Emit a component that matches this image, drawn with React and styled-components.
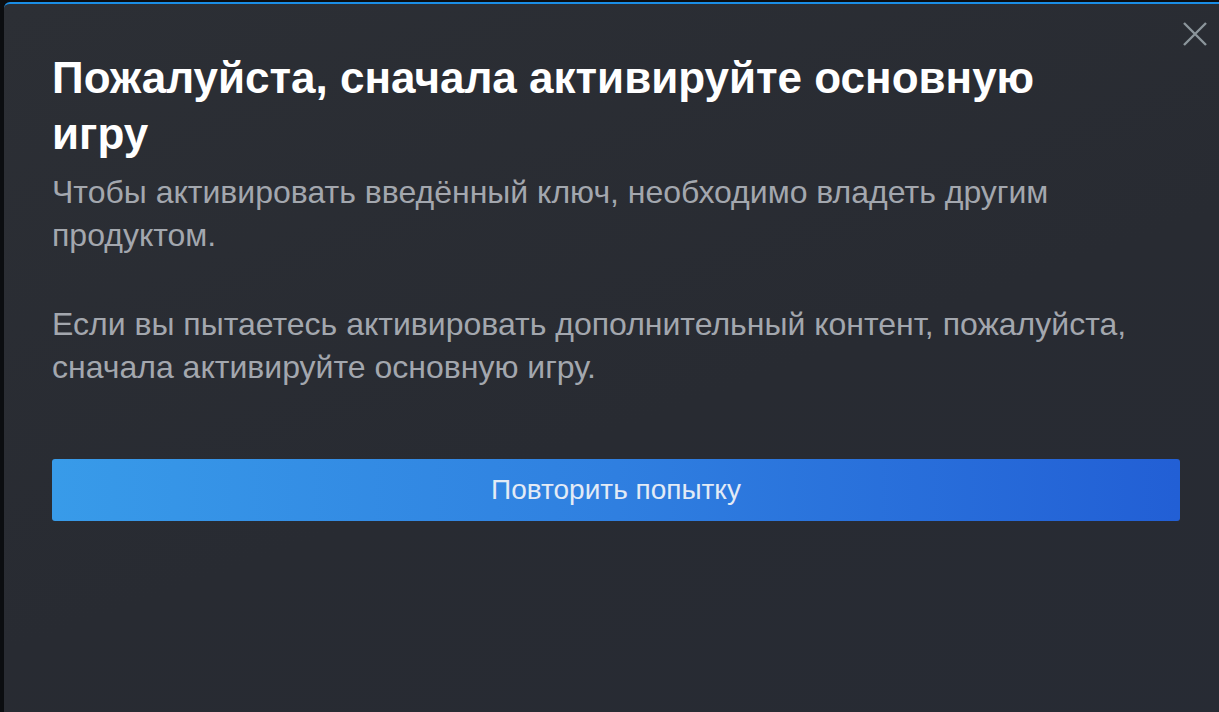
import React from 'react';
import styled, { createGlobalStyle } from 'styled-components';

const GlobalStyle = createGlobalStyle`
  html, body {
    margin: 0;
    padding: 0;
    background: #0b0d10;
    overflow: hidden;
    font-family: "Liberation Sans", Arial, sans-serif;
  }
`;

const Backdrop = styled.div`
  width: 1219px;
  height: 712px;
  padding: 2px 0 0 4px;
  box-sizing: border-box;
  overflow: hidden;
`;

const Modal = styled.div`
  position: relative;
  width: 1224px;
  height: 740px;
  box-sizing: border-box;
  padding: 46px 48px 0;
  border-top: 2px solid #1a8ee6;
  border-radius: 6px 6px 0 0;
  background: linear-gradient(160deg, #2c2f35 0%, #282b32 55%, #272b34 100%);
`;

const CloseButton = styled.button`
  position: absolute;
  top: 17px;
  right: 20px;
  width: 26px;
  height: 26px;
  padding: 0;
  border: none;
  background: none;
  cursor: pointer;
  display: flex;
  align-items: center;
  justify-content: center;
`;

const Title = styled.h1`
  margin: 0 0 9px;
  font-size: 44px;
  line-height: 56px;
  font-weight: 700;
  color: #ffffff;
  max-width: 1040px;
`;

const Body = styled.p`
  margin: 0;
  font-size: 32px;
  line-height: 43px;
  color: #a3a7ae;

  & + & {
    margin-top: 46px;
  }
`;

const RetryButton = styled.button`
  display: flex;
  align-items: center;
  justify-content: center;
  width: 100%;
  height: 62px;
  margin-top: 70px;
  border: none;
  border-radius: 3px;
  background: linear-gradient(90deg, #389be9 0%, #2f7fe0 50%, #225fd5 100%);
  color: #e3ebf6;
  font-family: "Liberation Sans", Arial, sans-serif;
  font-size: 28px;
  cursor: pointer;
`;

const App = () => {
  return (
    <>
      <GlobalStyle />
      <Backdrop>
        <Modal>
          <CloseButton aria-label='Закрыть'>
            <svg width='24' height='24' viewBox='0 0 24 24'>
              <path d='M1 1 L23 23 M23 1 L1 23' stroke='#8b959b' strokeWidth='2.4' />
            </svg>
          </CloseButton>
          <Title>Пожалуйста, сначала активируйте основную игру</Title>
          <Body>Чтобы активировать введённый ключ, необходимо владеть другим продуктом.</Body>
          <Body>
            Если вы пытаетесь активировать дополнительный контент, пожалуйста, сначала активируйте основную игру.
          </Body>
          <RetryButton>Повторить попытку</RetryButton>
        </Modal>
      </Backdrop>
    </>
  );
};

export default App;
